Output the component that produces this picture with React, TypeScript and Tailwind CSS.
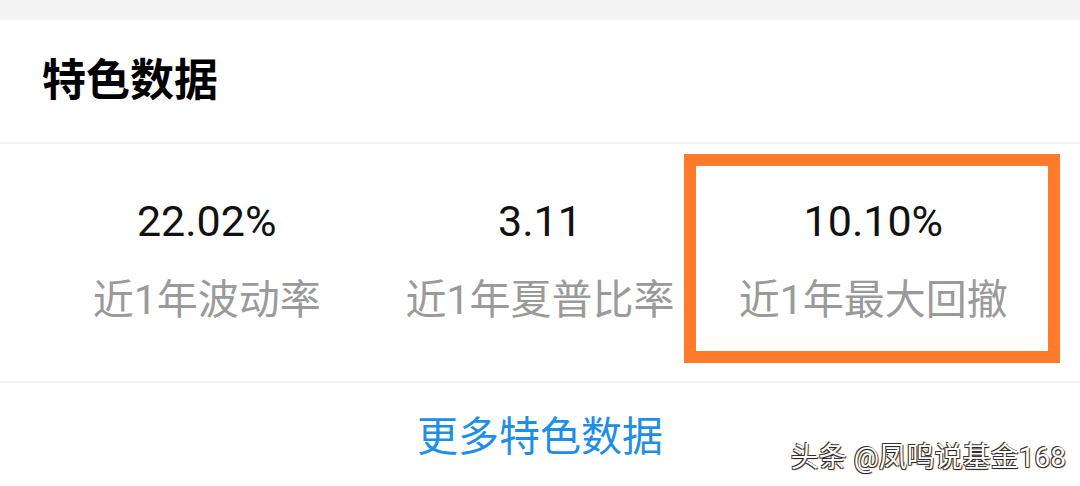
import React from "react";

const stats = [
  { value: "22.02%", label: "近1年波动率" },
  { value: "3.11", label: "近1年夏普比率" },
  { value: "10.10%", label: "近1年最大回撤" },
];

export default function App() {
  return (
    <div className="relative h-[486px] w-[1080px] overflow-hidden bg-white font-['Roboto','Noto_Sans_CJK_SC',sans-serif]">
      <div className="h-[20px] bg-[#f4f4f4]" />

      {/* header */}
      <div className="flex h-[122px] items-center px-[42px]">
        <h2 className="text-[44px] font-bold leading-none text-black">特色数据</h2>
      </div>
      <div className="h-[2px] bg-[#f2f2f2]" />

      {/* stats */}
      <div className="grid h-[237px] grid-cols-3 px-10">
        {stats.map((s) => (
          <div key={s.label} className="flex flex-col items-center pt-[56px]">
            <div className="text-[43px] leading-[42px] text-[#111]">{s.value}</div>
            <div className="mt-[38px] text-[41px] leading-[40px] text-[#9a9a9a]">{s.label}</div>
          </div>
        ))}
      </div>
      <div className="h-[2px] bg-[#f2f2f2]" />

      {/* footer link */}
      <div className="flex justify-center pt-[34px]">
        <span className="text-[41px] leading-[41px] text-[#1e8ee6]">更多特色数据</span>
      </div>

      {/* watermark */}
      <div className="absolute bottom-[14px] right-[14px] text-[28px] leading-none text-white [text-shadow:-1px_-1px_0_#333,1px_1px_1px_#222,-1px_1px_0_#444]">
        头条 @凤鸣说基金168
      </div>

      {/* highlight box */}
      <div className="absolute left-[684px] top-[154px] h-[209px] w-[376px] border-[12px] border-[#ff7a2a]" />
    </div>
  );
}
